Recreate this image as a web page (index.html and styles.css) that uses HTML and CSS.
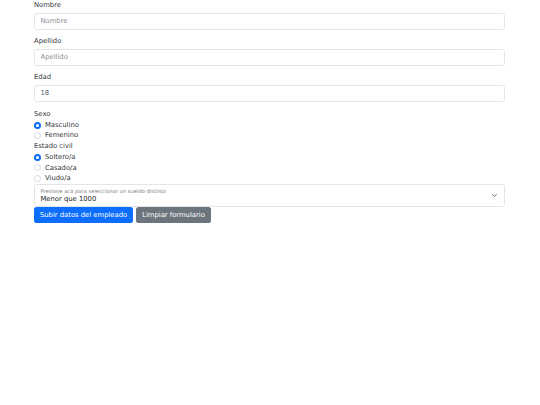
FILE: index.html
```html
<!DOCTYPE html>
<html lang="es">
<head>
<meta charset="utf-8">
<title>Formulario</title>
<link rel="stylesheet" href="styles.css">
</head>
<body>
<form class="form">
  <div class="group">
    <label class="label" for="nombre">Nombre</label>
    <input class="control" id="nombre" type="text" placeholder="Nombre">
  </div>
  <div class="group">
    <label class="label" for="apellido">Apellido</label>
    <input class="control" id="apellido" type="text" placeholder="Apellido">
  </div>
  <div class="group">
    <label class="label" for="edad">Edad</label>
    <input class="control" id="edad" type="text" value="18">
  </div>
  <div class="radios">
    <div class="legend">Sexo</div>
    <label class="check"><span class="radio on"></span>Masculino</label>
    <label class="check"><span class="radio"></span>Femenino</label>
    <div class="legend">Estado civil</div>
    <label class="check"><span class="radio on"></span>Soltero/a</label>
    <label class="check"><span class="radio"></span>Casado/a</label>
    <label class="check"><span class="radio"></span>Viudo/a</label>
  </div>
  <div class="select">
    <div class="select-text">
      <span class="select-label">Presione acá para seleccionar un sueldo distinto</span>
      <span class="select-value">Menor que 1000</span>
    </div>
    <svg class="chevron" width="7" height="5" viewBox="0 0 16 16"><path d="M2 5l6 6 6-6" fill="none" stroke="#343a40" stroke-width="2.4" stroke-linecap="round" stroke-linejoin="round"/></svg>
  </div>
  <div class="buttons">
    <button class="btn primary" type="button">Subir datos del empleado</button>
    <button class="btn secondary" type="button">Limpiar formulario</button>
  </div>
</form>
</body>
</html>
```
FILE: styles.css
```css
html, body {
  margin: 0;
  padding: 0;
  background: #fff;
}
body {
  font-family: "DejaVu Sans", sans-serif;
  font-size: 6.8px;
  color: #33383d;
}
.form {
  width: 471px;
  margin-left: 34px;
  display: flex;
  flex-direction: column;
}
.group {
  display: flex;
  flex-direction: column;
  margin-bottom: 6.5px;
}
.label {
  line-height: 10.5px;
  margin-bottom: 2.5px;
}
.control {
  box-sizing: border-box;
  height: 16.5px;
  width: 100%;
  border: 1px solid #e3e6e9;
  border-radius: 2.5px;
  padding: 0 5.5px;
  font-family: inherit;
  font-size: 6.8px;
  color: #5a6066;
  background: #fff;
  outline: none;
}
.control::placeholder {
  color: #8a9096;
}
.radios {
  display: flex;
  flex-direction: column;
  margin-top: 1px;
}
.legend {
  line-height: 10.7px;
}
.check {
  display: flex;
  align-items: center;
  line-height: 10.7px;
}
.radio {
  box-sizing: border-box;
  width: 7px;
  height: 7px;
  border-radius: 50%;
  border: 1px solid #d6dadf;
  margin-right: 4px;
  background: #fff;
}
.radio.on {
  border: 2px solid #0d6efd;
  background: #fff;
}
.select {
  box-sizing: border-box;
  height: 23px;
  border: 1px solid #e3e6e9;
  border-radius: 2.5px;
  display: flex;
  align-items: center;
  padding: 0 5.5px;
}
.select-text {
  flex: 1;
  display: flex;
  flex-direction: column;
  padding-top: 1px;
}
.select-label {
  font-size: 5.2px;
  line-height: 7px;
  color: #7a8087;
}
.select-value {
  font-size: 6.8px;
  line-height: 9px;
  color: #212529;
}
.chevron {
  margin-right: 1px;
}
.buttons {
  display: flex;
  gap: 3px;
  margin-top: 0.5px;
}
.btn {
  height: 16px;
  border: none;
  border-radius: 2.5px;
  padding: 0 6px;
  font-family: inherit;
  font-size: 6.8px;
  color: #fff;
  cursor: pointer;
}
.primary {
  background: #0d6efd;
}
.secondary {
  background: #6c757d;
}
```
